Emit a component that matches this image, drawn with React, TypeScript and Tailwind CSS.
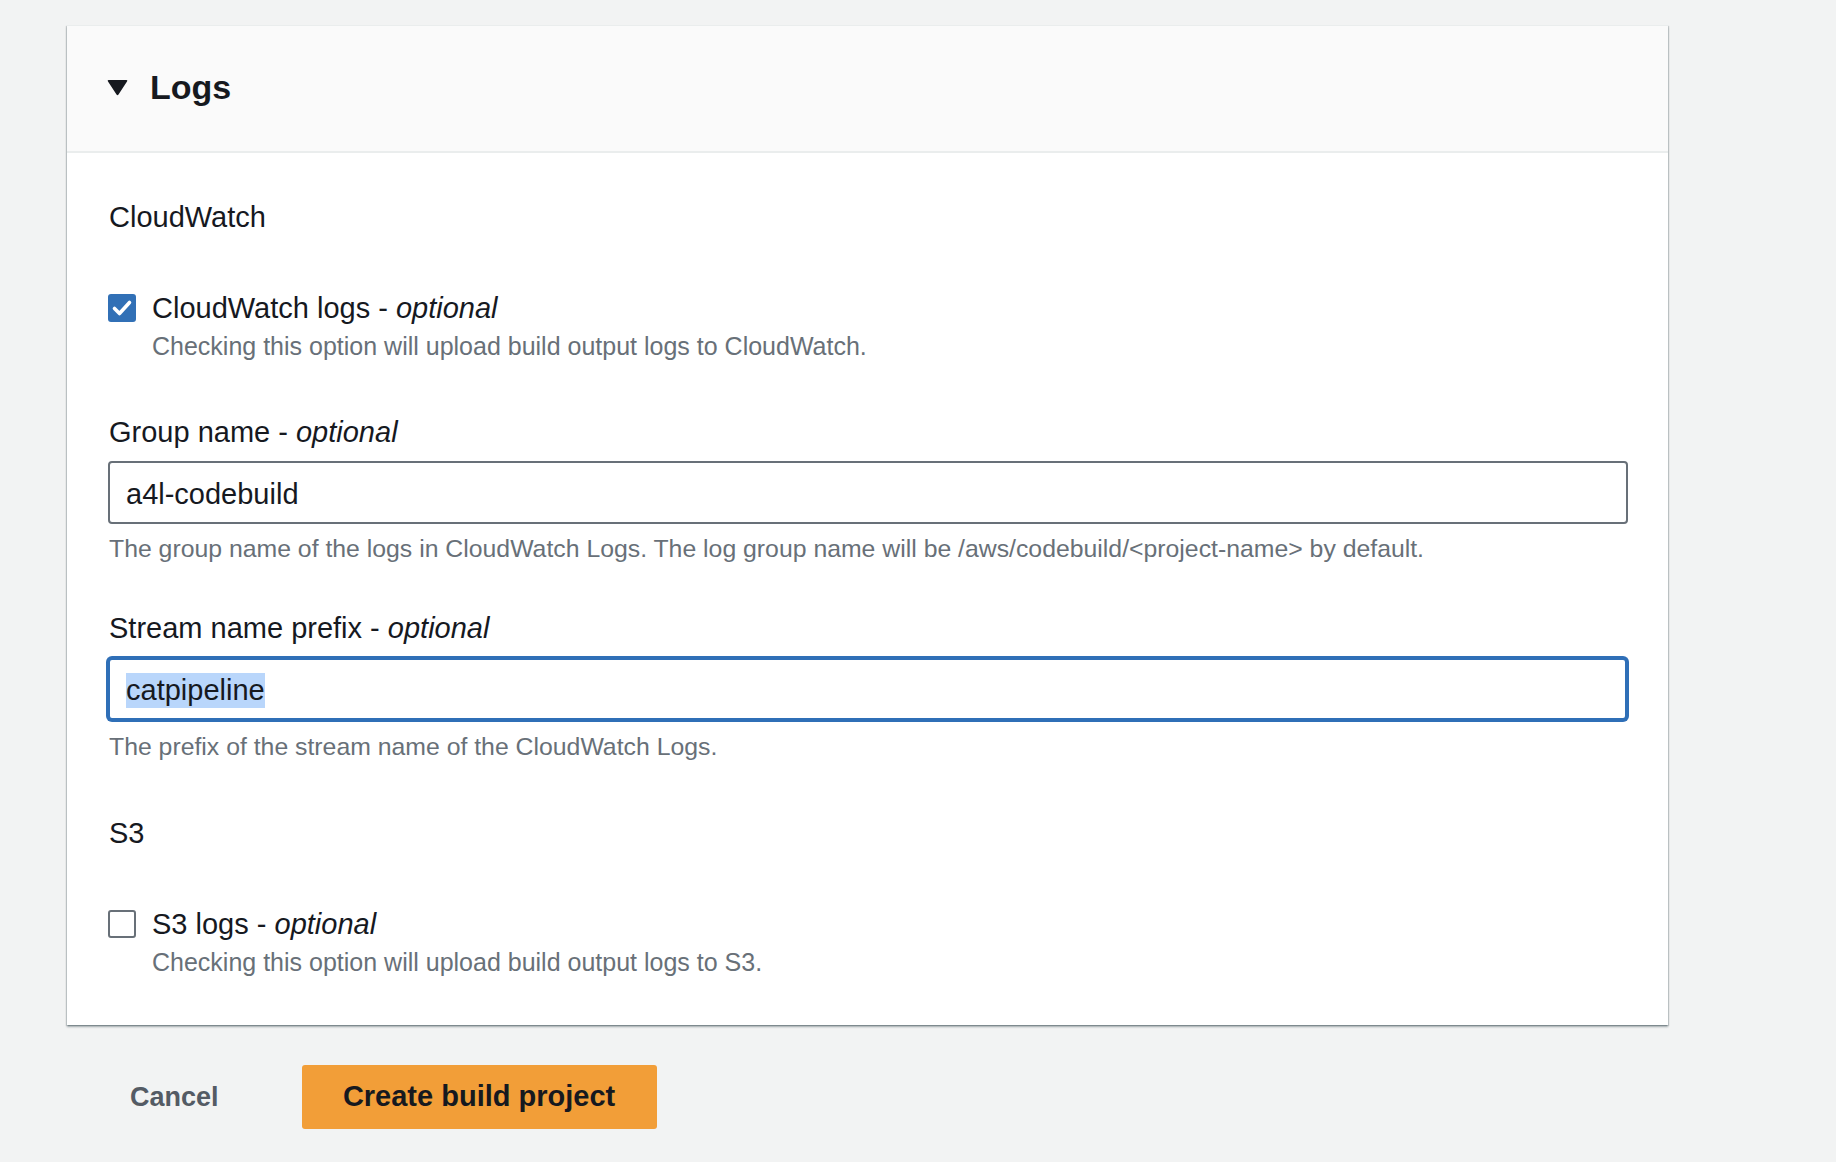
import React from "react";

function CheckedBox() {
  return (
    <div className="w-[28px] h-[28px] rounded-[3px] bg-[#3170b6] flex items-center justify-center shrink-0">
      <svg width="28" height="28" viewBox="0 0 28 28">
        <polyline
          points="6.5,14.5 11.5,19.5 21.5,8.5"
          fill="none"
          stroke="#ffffff"
          strokeWidth="3.6"
          strokeLinecap="round"
          strokeLinejoin="round"
        />
      </svg>
    </div>
  );
}

function EmptyBox() {
  return (
    <div className="w-[28px] h-[28px] rounded-[3px] bg-white border-2 border-[#687078] shrink-0" />
  );
}

function CheckRow({
  checked,
  label,
  desc,
}: {
  checked: boolean;
  label: string;
  desc: string;
}) {
  return (
    <div className="flex items-start">
      <div className="mt-[6px] ml-[1px]">{checked ? <CheckedBox /> : <EmptyBox />}</div>
      <div className="ml-[16px] flex flex-col">
        <div className="text-[29px] leading-[41px] text-[#16191f]">
          {label} - <i>optional</i>
        </div>
        <div className="text-[25px] leading-[34px] text-[#687078]">{desc}</div>
      </div>
    </div>
  );
}

export default function App() {
  return (
    <div className="h-[1162px] overflow-hidden w-full bg-[#f2f3f3] pt-[25px] pl-[67px] font-['Liberation_Sans',Arial,sans-serif]">
      <div className="w-[1601px] bg-white border-t border-[#eaeded] shadow-[0_2px_2px_0_rgba(0,28,36,0.3),1px_1px_1px_0_rgba(0,28,36,0.15),-1px_1px_1px_0_rgba(0,28,36,0.15)]">
        {/* Header */}
        <div className="h-[127px] bg-[#fafafa] border-b-2 border-[#eaeded] flex items-center pl-[40px]">
          <svg width="21" height="17" viewBox="0 0 21 17" className="shrink-0 mt-[-3px]">
            <path d="M1.5 1 L19.5 1 Q21 1 20 2.5 L11.5 15.5 Q10.5 17 9.5 15.5 L1 2.5 Q0 1 1.5 1 Z" fill="#16191f" />
          </svg>
          <div className="ml-[22px] mt-[-4px] text-[34px] leading-[40px] font-bold text-[#16191f]">Logs</div>
        </div>

        {/* Content */}
        <div className="px-[40px] pt-[44px] pb-[46px] flex flex-col">
          <div className="pl-[2px] text-[29px] leading-[41px] text-[#16191f]">CloudWatch</div>

          <div className="mt-[50px]">
            <CheckRow
              checked={true}
              label="CloudWatch logs"
              desc="Checking this option will upload build output logs to CloudWatch."
            />
          </div>

          {/* Group name */}
          <div className="mt-[49px] flex flex-col">
            <div className="pl-[2px] text-[29px] leading-[41px] text-[#16191f]">
              Group name - <i>optional</i>
            </div>
            <div className="mt-[8px] ml-[1px] h-[63px] border-2 border-[#687078] rounded-[4px] bg-white flex items-center pl-[16px] pt-[4px] text-[29px] text-[#16191f]">
              a4l-codebuild
            </div>
            <div className="mt-[8px] pl-[2px] text-[24.8px] leading-[34px] text-[#687078]">
              The group name of the logs in CloudWatch Logs. The log group name will be /aws/codebuild/&lt;project-name&gt; by default.
            </div>
          </div>

          {/* Stream name */}
          <div className="mt-[42px] flex flex-col">
            <div className="pl-[2px] text-[29px] leading-[41px] text-[#16191f]">
              Stream name prefix - <i>optional</i>
            </div>
            <div className="mt-[8px] h-[64px] border-[3px] border-[#2f6fb7] shadow-[0_0_0_1px_#2f6fb7] rounded-[5px] bg-white flex items-center pl-[16px] pt-[2px] text-[29px] text-[#16191f]">
              <span className="bg-[#b9d6fb] leading-[35px]">catpipeline</span>
            </div>
            <div className="mt-[9px] pl-[2px] text-[24.8px] leading-[34px] text-[#687078]">
              The prefix of the stream name of the CloudWatch Logs.
            </div>
          </div>

          <div className="mt-[49px] pl-[2px] text-[29px] leading-[41px] text-[#16191f]">S3</div>

          <div className="mt-[50px]">
            <CheckRow
              checked={false}
              label="S3 logs"
              desc="Checking this option will upload build output logs to S3."
            />
          </div>
        </div>
      </div>

      {/* Actions */}
      <div className="mt-[40px] ml-[20px] flex items-center gap-[41px]">
        <button className="h-[63px] pl-[43px] pr-[42px] text-[27px] font-bold text-[#545b64] bg-transparent">
          Cancel
        </button>
        <button className="h-[64px] w-[355px] rounded-[3px] bg-[#f29e38] text-[29px] font-bold text-[#16191f] flex items-center justify-center">
          Create build project
        </button>
      </div>
    </div>
  );
}
